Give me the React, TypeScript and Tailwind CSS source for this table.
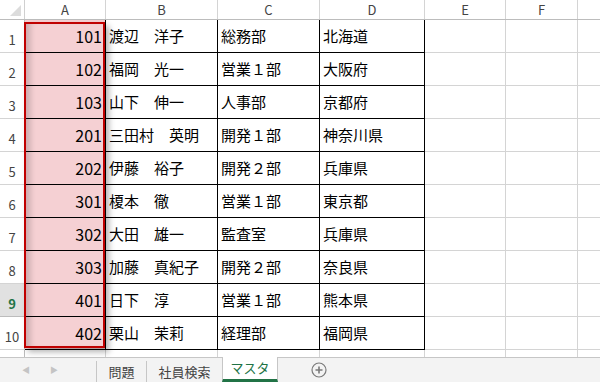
import React from 'react'

const rows = [
  ['101', '渡辺　洋子', '総務部', '北海道'],
  ['102', '福岡　光一', '営業１部', '大阪府'],
  ['103', '山下　伸一', '人事部', '京都府'],
  ['201', '三田村　英明', '開発１部', '神奈川県'],
  ['202', '伊藤　裕子', '開発２部', '兵庫県'],
  ['301', '榎本　徹', '営業１部', '東京都'],
  ['302', '大田　雄一', '監査室', '兵庫県'],
  ['303', '加藤　真紀子', '開発２部', '奈良県'],
  ['401', '日下　淳', '営業１部', '熊本県'],
  ['402', '栗山　茉莉', '経理部', '福岡県'],
]

const font = { fontFamily: '"Noto Sans CJK JP", "Noto Sans", sans-serif' }

export default function App() {
  return (
    <div className="relative w-[600px] h-[382px] overflow-hidden bg-white" style={font}>
      {/* column headers */}
      <div className="flex h-[20px] border-b border-[#bcbcbc] text-[13px] text-[#444]">
        <div className="relative w-[25px] border-r border-[#d0d0d0]">
          <div className="absolute right-[3px] bottom-[3px] w-0 h-0 border-l-[11px] border-l-transparent border-b-[11px] border-b-[#dcdcdc]" />
        </div>
        <div className="w-[81px] border-r border-[#d4d4d4] flex items-center justify-center">A</div>
        <div className="w-[112px] border-r border-[#d4d4d4] flex items-center justify-center">B</div>
        <div className="w-[102px] border-r border-[#d4d4d4] flex items-center justify-center">C</div>
        <div className="w-[105px] border-r border-[#d4d4d4] flex items-center justify-center">D</div>
        <div className="w-[81px] border-r border-[#d4d4d4] flex items-center justify-center">E</div>
        <div className="w-[72px] border-r border-[#d4d4d4] flex items-center justify-center">F</div>
        <div className="flex-1" />
      </div>

      {/* data rows */}
      {rows.map((r, i) => (
        <div key={i} className="flex h-[33px]">
          <div
            className={
              i === 8
                ? 'w-[25px] border-r border-b border-[#bcbcbc] bg-[#e1e1e1] text-[#217346] font-bold text-[13px] flex items-end justify-center pb-[3px]'
                : 'w-[25px] border-r border-b border-r-[#bcbcbc] border-b-[#d4d4d4] text-[#444] text-[13px] flex items-end justify-center pb-[3px]'
            }
          >
            {i + 1}
          </div>
          <div className="w-[81px] border-r border-b border-black bg-[#f5d0d3] text-[16px] text-black flex items-center justify-end pr-[3px]">
            {r[0]}
          </div>
          <div className="w-[112px] border-r border-b border-black text-[15px] text-black flex items-center pl-[3px] whitespace-nowrap">
            {r[1]}
          </div>
          <div className="w-[102px] border-r border-b border-black text-[15px] text-black flex items-center pl-[3px] whitespace-nowrap">
            {r[2]}
          </div>
          <div className="w-[105px] border-r border-b border-black text-[15px] text-black flex items-center pl-[3px] whitespace-nowrap">
            {r[3]}
          </div>
          <div className="w-[81px] border-r border-b border-[#d4d4d4]" />
          <div className="w-[72px] border-r border-b border-[#d4d4d4]" />
          <div className="flex-1 border-b border-[#d4d4d4]" />
        </div>
      ))}

      {/* partial row 11 */}
      <div className="flex h-[7px]">
        <div className="w-[25px] border-r border-[#bcbcbc]" />
        <div className="w-[81px] border-r border-[#d4d4d4]" />
        <div className="w-[112px] border-r border-[#d4d4d4]" />
        <div className="w-[102px] border-r border-[#d4d4d4]" />
        <div className="w-[105px] border-r border-[#d4d4d4]" />
        <div className="w-[81px] border-r border-[#d4d4d4]" />
        <div className="w-[72px] border-r border-[#d4d4d4]" />
        <div className="flex-1" />
      </div>

      {/* sheet tabs */}
      <div className="flex h-[25px] border-t border-[#c6c6c6] bg-[#f3f3f3] text-[13px] text-[#444]">
        <div className="w-[96px] flex items-center">
          <span className="ml-[22px] text-[8px] text-[#c4c4c4]">◀</span>
          <span className="ml-[20px] text-[8px] text-[#c4c4c4]">▶</span>
        </div>
        <div className="w-[50px] border-l border-[#c6c6c6] flex items-center justify-center mt-[3px]">問題</div>
        <div className="w-[76px] border-l border-[#c6c6c6] flex items-center justify-center mt-[3px]">社員検索</div>
        <div className="w-[56px] -mt-px border-x border-[#c6c6c6] bg-white flex items-center justify-center text-[#217346] border-b-[3px] border-b-[#217346]">
          マスタ
        </div>
        <div className="ml-[33px] flex items-center">
          <svg width="16" height="16" viewBox="0 0 16 16">
            <circle cx="8" cy="8" r="7" fill="none" stroke="#7a7a7a" strokeWidth="1.2" />
            <path d="M8 4.5v7M4.5 8h7" stroke="#7a7a7a" strokeWidth="1.6" />
          </svg>
        </div>
      </div>

      {/* highlight shape over column A */}
      <div className="absolute left-[24px] top-[22px] w-[81px] h-[326px] border-2 border-[#c00000] shadow-[4px_4px_6px_rgba(0,0,0,0.3),inset_8px_0_6px_-4px_rgba(0,0,0,0.18)]" />
    </div>
  )
}
